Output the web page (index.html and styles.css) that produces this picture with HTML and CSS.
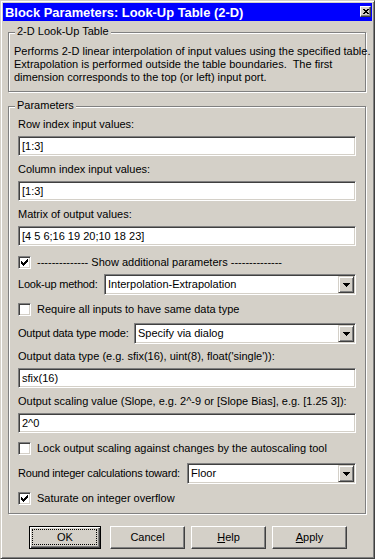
FILE: index.html
```html
<!DOCTYPE html>
<html>
<head>
<meta charset="utf-8">
<title>Block Parameters: Look-Up Table (2-D)</title>
<link rel="stylesheet" href="styles.css">
</head>
<body>
<div class="window">
  <div class="titlebar">
    <span class="title">Block Parameters: Look-Up Table (2-D)</span>
    <span class="close"><svg width="6" height="5" viewBox="0 0 6 5" shape-rendering="crispEdges"><path d="M0 0h2v1H0z M4 0h2v1H4z M1 1h4v1H1z M2 2h2v1H2z M1 3h4v1H1z M0 4h2v1H0z M4 4h2v1H4z" fill="#000"/></svg></span>
  </div>
  <div class="client">
    <div class="group desc">
      <span class="legend">2-D Look-Up Table</span>
      <p class="line">Performs 2-D linear interpolation of input values using the specified table.</p>
      <p class="line">Extrapolation is performed outside the table boundaries.&nbsp; The first</p>
      <p class="line">dimension corresponds to the top (or left) input port.</p>
    </div>
    <div class="group params">
      <span class="legend">Parameters</span>
      <div class="lbl">Row index input values:</div>
      <div class="edit mt5">[1:3]</div>
      <div class="lbl mt7">Column index input values:</div>
      <div class="edit mt5">[1:3]</div>
      <div class="lbl mt7">Matrix of output values:</div>
      <div class="edit mt5">[4 5 6;16 19 20;10 18 23]</div>
      <div class="check mt10"><span class="cb checked"><svg width="7" height="7" viewBox="0 0 7 7" shape-rendering="crispEdges"><path d="M0 2h1v3H0z M1 3h1v3H1z M2 4h1v3H2z M3 3h1v3H3z M4 2h1v3H4z M5 1h1v3H5z M6 0h1v3H6z" fill="#000"/></svg></span><span class="cb-text">-------------- Show additional parameters --------------</span></div>
      <div class="combo-row mt5">
        <span class="combo-label w-lookup">Look-up method:</span>
        <div class="combo"><span class="combo-text">Interpolation-Extrapolation</span><span class="drop"><svg width="7" height="4" viewBox="0 0 7 4" shape-rendering="crispEdges"><path d="M0 0h7v1H0z M1 1h5v1H1z M2 2h3v1H2z M3 3h1v1H3z" fill="#000"/></svg></span></div>
      </div>
      <div class="check mt8"><span class="cb"></span><span class="cb-text">Require all inputs to have same data type</span></div>
      <div class="combo-row mt7">
        <span class="combo-label w-mode">Output data type mode:</span>
        <div class="combo"><span class="combo-text">Specify via dialog</span><span class="drop"><svg width="7" height="4" viewBox="0 0 7 4" shape-rendering="crispEdges"><path d="M0 0h7v1H0z M1 1h5v1H1z M2 2h3v1H2z M3 3h1v1H3z" fill="#000"/></svg></span></div>
      </div>
      <div class="lbl mt6">Output data type (e.g. sfix(16), uint(8), float('single')):</div>
      <div class="edit mt5">sfix(16)</div>
      <div class="lbl mt7">Output scaling value (Slope, e.g. 2^-9 or [Slope Bias], e.g. [1.25 3]):</div>
      <div class="edit mt5">2^0</div>
      <div class="check mt9"><span class="cb"></span><span class="cb-text">Lock output scaling against changes by the autoscaling tool</span></div>
      <div class="combo-row mt8">
        <span class="combo-label w-round">Round integer calculations toward:</span>
        <div class="combo"><span class="combo-text">Floor</span><span class="drop"><svg width="7" height="4" viewBox="0 0 7 4" shape-rendering="crispEdges"><path d="M0 0h7v1H0z M1 1h5v1H1z M2 2h3v1H2z M3 3h1v1H3z" fill="#000"/></svg></span></div>
      </div>
      <div class="check mt8"><span class="cb checked"><svg width="7" height="7" viewBox="0 0 7 7" shape-rendering="crispEdges"><path d="M0 2h1v3H0z M1 3h1v3H1z M2 4h1v3H2z M3 3h1v3H3z M4 2h1v3H4z M5 1h1v3H5z M6 0h1v3H6z" fill="#000"/></svg></span><span class="cb-text">Saturate on integer overflow</span></div>
    </div>
    <div class="buttons">
      <span class="btn default"><span class="btn-label">OK</span></span>
      <span class="btn"><span class="btn-label">Cancel</span></span>
      <span class="btn"><span class="btn-label"><u>H</u>elp</span></span>
      <span class="btn"><span class="btn-label"><u>A</u>pply</span></span>
    </div>
  </div>
</div>
</body>
</html>
```

FILE: styles.css
```css
* { box-sizing: border-box; margin: 0; padding: 0; }
html, body { width: 375px; height: 559px; overflow: hidden; background: #d4d0c8; }
body {
  font-family: "Liberation Sans", Arial, sans-serif;
  font-size: 11px;
  line-height: 13px;
  color: #000;
}
.window {
  width: 375px;
  height: 559px;
  background: #d4d0c8;
  border: 1px solid;
  border-color: #d4d0c8 #404040 #404040 #d4d0c8;
  box-shadow: inset 1px 1px 0 #fff, inset -1px -1px 0 #808080;
  padding: 2px;
  display: flex;
  flex-direction: column;
}
.titlebar {
  height: 18px;
  background: #0000ff;
  display: flex;
  align-items: center;
  padding-left: 2px;
}
.title {
  color: #fff;
  font-weight: bold;
  font-size: 12.9px;
  white-space: nowrap;
}
.close {
  margin-left: auto;
  margin-right: 1px;
  align-self: flex-start;
  margin-top: 3px;
  width: 11px;
  height: 11px;
  background: #d4d0c8;
  border: 1px solid;
  border-color: #fff #404040 #404040 #fff;
  box-shadow: inset -1px -1px 0 #808080;
  display: flex;
  align-items: center;
  justify-content: center;
  padding-bottom: 1px;
}
.close svg { display: block; }
.client {
  flex: 1;
  padding: 0 6px 0 5px;
  display: flex;
  flex-direction: column;
}
.group {
  position: relative;
  border: 1px solid #808080;
  box-shadow: inset 1px 1px 0 #fff, 1px 1px 0 #fff;
}
.legend {
  position: absolute;
  top: -8px;
  left: 6px;
  padding: 0 2px;
  background: #d4d0c8;
  line-height: 13px;
  white-space: nowrap;
}
.desc {
  margin-top: 11px;
  height: 60px;
  padding: 12px 0 0 5px;
}
.line { white-space: nowrap; height: 13px; }
.params {
  margin-top: 14px;
  height: 408px;
  padding: 11px 9px 0 9px;
  display: flex;
  flex-direction: column;
}
.lbl { height: 13px; white-space: nowrap; }
.mt5 { margin-top: 5px; }
.mt6 { margin-top: 6px; }
.mt7 { margin-top: 7px; }
.mt8 { margin-top: 8px; }
.mt9 { margin-top: 9px; }
.mt10 { margin-top: 10px; }
.edit, .combo, .cb {
  background: #fff;
  border: 1px solid;
  border-color: #808080 #fff #fff #808080;
  box-shadow: inset 1px 1px 0 #404040, inset -1px -1px 0 #d4d0c8;
}
.edit {
  height: 20px;
  padding: 1px 3px;
  line-height: 17px;
  white-space: nowrap;
}
.check {
  height: 13px;
  display: flex;
  align-items: center;
}
.cb {
  width: 13px;
  height: 13px;
  flex: none;
  padding: 2px;
}
.cb svg { display: block; }
.cb-text { margin-left: 6px; white-space: nowrap; }
.combo-row {
  height: 21px;
  display: flex;
  align-items: center;
}
.combo-label { flex: none; white-space: nowrap; letter-spacing: -0.2px; }
.w-lookup { width: 86px; }
.w-mode { width: 116px; }
.w-round { width: 169px; }
.combo {
  flex: 1;
  height: 21px;
  padding: 1px;
  display: flex;
  align-items: center;
}
.combo-text { flex: 1; padding-left: 2px; white-space: nowrap; }
.drop {
  width: 16px;
  height: 17px;
  flex: none;
  background: #d4d0c8;
  border: 1px solid;
  border-color: #d4d0c8 #404040 #404040 #d4d0c8;
  box-shadow: inset 1px 1px 0 #fff, inset -1px -1px 0 #808080;
  display: flex;
  align-items: center;
  justify-content: center;
}
.drop svg { display: block; }
.buttons {
  margin-top: 12px;
  margin-left: 21px;
  display: flex;
  gap: 6px;
}
.btn {
  position: relative;
  width: 75px;
  height: 23px;
  background: #d4d0c8;
  border: 1px solid;
  border-color: #fff #404040 #404040 #fff;
  box-shadow: inset -1px -1px 0 #808080;
  display: flex;
  align-items: center;
  justify-content: center;
}
.btn.default {
  width: 72px;
  margin-right: 3px;
  border: 1px solid #000;
  box-shadow: inset 1px 1px 0 #fff, inset -1px -1px 0 #404040, inset -2px -2px 0 #808080;
}
.btn.default::before {
  content: "";
  position: absolute;
  top: 2px;
  left: 2px;
  right: 3px;
  bottom: 3px;
  border: 1px dotted #000;
}
.btn-label { line-height: 13px; }
.btn-label u { text-underline-offset: 1px; }
```
